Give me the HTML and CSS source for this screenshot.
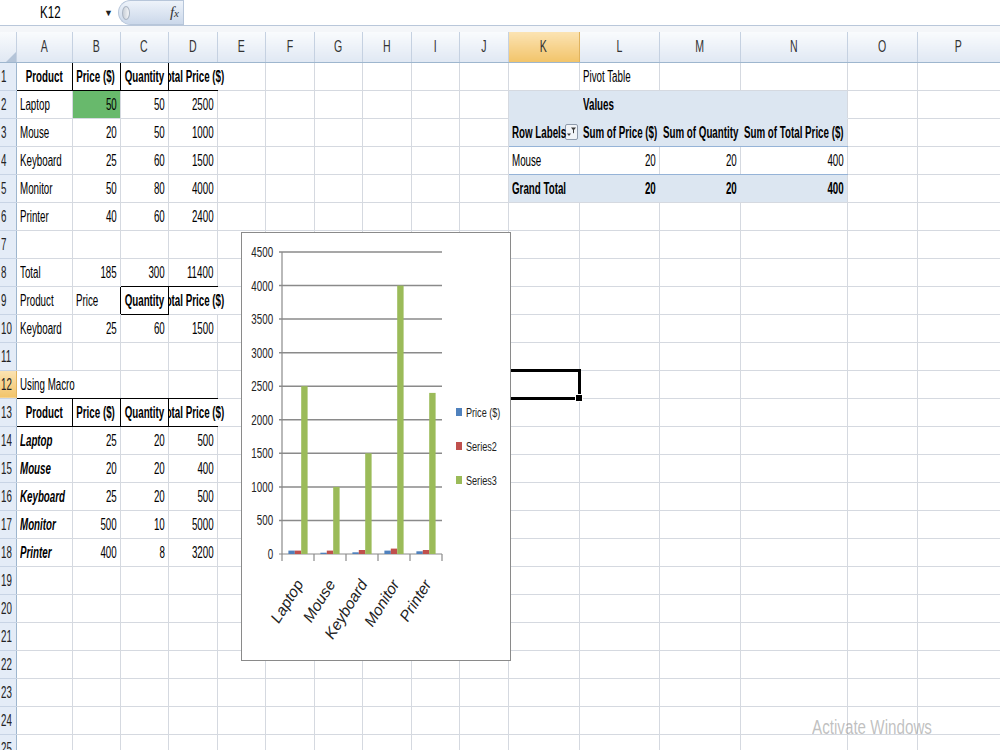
FILE: index.html
```html
<!DOCTYPE html>
<html lang="en">
<head>
  <meta charset="UTF-8">
  <meta name="viewport" content="width=device-width, initial-scale=1.0">
  <title>Book1 - Products</title>
  <link rel="stylesheet" href="styles.css">
</head>
<body>
  <div class="workbook">
    <!-- Formula bar -->
    <div class="formula-bar">
      <div class="name-box"><span>K12</span></div>
      <span class="drop">&#9660;</span>
      <div class="fx-pill">
        <span class="knob"></span>
        <span class="fx">f<small>x</small></span>
      </div>
      <div class="formula-input"></div>
    </div>
    <div class="bar-gap"></div>

    <!-- Sheet -->
    <table class="sheet">
      <colgroup>
        <col style="width:16px"><col style="width:56px"><col style="width:48px"><col style="width:48px">
        <col style="width:49px"><col style="width:48px"><col style="width:49px"><col style="width:48px">
        <col style="width:49px"><col style="width:48px"><col style="width:49px"><col style="width:71px">
        <col style="width:80px"><col style="width:81px"><col style="width:107px"><col style="width:70px">
        <col style="width:83px">
      </colgroup>
      <thead>
        <tr>
          <th class="corner"><svg width="10" height="10" viewBox="0 0 10 10"><path d="M10 0V10H0Z" fill="#b4c4d8"/></svg></th>
          <th><span>A</span></th><th><span>B</span></th><th><span>C</span></th><th><span>D</span></th><th><span>E</span></th><th><span>F</span></th><th><span>G</span></th><th><span>H</span></th><th><span>I</span></th><th><span>J</span></th>
          <th class="sel"><span>K</span></th><th><span>L</span></th><th><span>M</span></th><th><span>N</span></th><th><span>O</span></th><th><span>P</span></th>
        </tr>
      </thead>
      <tbody>
        <tr><th><span>1</span></th><td class="b c br bb"><span>Product</span></td><td class="b c br bb"><span>Price ($)</span></td><td class="b c br bb"><span>Quantity</span></td><td class="b bb spill"><div class="fit"><span>Total Price ($)</span></div></td><td></td><td></td><td></td><td></td><td></td><td></td><td></td><td><span>Pivot Table</span></td><td></td><td></td><td></td><td></td></tr>
        <tr><th><span>2</span></th><td><span>Laptop</span></td><td class="n good"><span>50</span></td><td class="n"><span>50</span></td><td class="n"><span>2500</span></td><td></td><td></td><td></td><td></td><td></td><td></td><td class="fill fill-r fill-b"></td><td class="fill fill-r fill-b b"><span>Values</span></td><td class="fill fill-r fill-b"></td><td class="fill fill-b"></td><td></td><td></td></tr>
        <tr><th><span>3</span></th><td><span>Mouse</span></td><td class="n"><span>20</span></td><td class="n"><span>50</span></td><td class="n"><span>1000</span></td><td></td><td></td><td></td><td></td><td></td><td></td>
          <td class="fill fill-r pvline b"><div class="row-labels"><span>Row Labels</span>
            <svg class="filter" width="13" height="16" viewBox="0 0 13 16"><rect x="0.5" y="0.5" width="12" height="15" rx="1.5" fill="#f1f4f8" stroke="#8e9aab"/><path d="M6 3.5h5l-2 2.4v3.6l-1-.8V5.9z" fill="#3a3a3a"/><path d="M2 9.5h4l-2 2.6z" fill="#3a3a3a"/></svg>
          </div></td>
          <td class="fill fill-r pvline b"><span>Sum of Price ($)</span></td><td class="fill fill-r pvline b"><span>Sum of Quantity</span></td><td class="fill pvline b"><span>Sum of Total Price ($)</span></td><td></td><td></td></tr>
        <tr><th><span>4</span></th><td><span>Keyboard</span></td><td class="n"><span>25</span></td><td class="n"><span>60</span></td><td class="n"><span>1500</span></td><td></td><td></td><td></td><td></td><td></td><td></td><td class="pvline"><span>Mouse</span></td><td class="n pvline"><span>20</span></td><td class="n pvline"><span>20</span></td><td class="n pvline"><span>400</span></td><td></td><td></td></tr>
        <tr><th><span>5</span></th><td><span>Monitor</span></td><td class="n"><span>50</span></td><td class="n"><span>80</span></td><td class="n"><span>4000</span></td><td></td><td></td><td></td><td></td><td></td><td></td><td class="fill fill-r b"><span>Grand Total</span></td><td class="fill fill-r b n"><span>20</span></td><td class="fill fill-r b n"><span>20</span></td><td class="fill b n"><span>400</span></td><td></td><td></td></tr>
        <tr><th><span>6</span></th><td><span>Printer</span></td><td class="n"><span>40</span></td><td class="n"><span>60</span></td><td class="n"><span>2400</span></td><td></td><td></td><td></td><td></td><td></td><td></td><td></td><td></td><td></td><td></td><td></td><td></td></tr>
        <tr><th><span>7</span></th><td></td><td></td><td></td><td></td><td></td><td></td><td></td><td></td><td></td><td></td><td></td><td></td><td></td><td></td><td></td><td></td></tr>
        <tr><th><span>8</span></th><td><span>Total</span></td><td class="n"><span>185</span></td><td class="n bb"><span>300</span></td><td class="n bb"><span>11400</span></td><td></td><td></td><td></td><td></td><td></td><td></td><td></td><td></td><td></td><td></td><td></td><td></td></tr>
        <tr><th><span>9</span></th><td><span>Product</span></td><td class="br"><span>Price</span></td><td class="b c br bb"><span>Quantity</span></td><td class="b spill"><div class="fit"><span>Total Price ($)</span></div></td><td></td><td></td><td></td><td></td><td></td><td></td><td></td><td></td><td></td><td></td><td></td><td></td></tr>
        <tr><th><span>10</span></th><td><span>Keyboard</span></td><td class="n"><span>25</span></td><td class="n"><span>60</span></td><td class="n"><span>1500</span></td><td></td><td></td><td></td><td></td><td></td><td></td><td></td><td></td><td></td><td></td><td></td><td></td></tr>
        <tr><th><span>11</span></th><td></td><td></td><td></td><td></td><td></td><td></td><td></td><td></td><td></td><td></td><td></td><td></td><td></td><td></td><td></td><td></td></tr>
        <tr><th class="sel"><span>12</span></th><td class="bb spill"><span>Using Macro</span></td><td class="bb"></td><td class="bb"></td><td class="bb"></td><td></td><td></td><td></td><td></td><td></td><td></td><td class="active"></td><td></td><td></td><td></td><td></td><td></td></tr>
        <tr><th><span>13</span></th><td class="b c br bb"><span>Product</span></td><td class="b c br bb"><span>Price ($)</span></td><td class="b c br bb"><span>Quantity</span></td><td class="b bb spill"><div class="fit"><span>Total Price ($)</span></div></td><td></td><td></td><td></td><td></td><td></td><td></td><td></td><td></td><td></td><td></td><td></td><td></td></tr>
        <tr><th><span>14</span></th><td class="bi"><span>Laptop</span></td><td class="n"><span>25</span></td><td class="n"><span>20</span></td><td class="n"><span>500</span></td><td></td><td></td><td></td><td></td><td></td><td></td><td></td><td></td><td></td><td></td><td></td><td></td></tr>
        <tr><th><span>15</span></th><td class="bi"><span>Mouse</span></td><td class="n"><span>20</span></td><td class="n"><span>20</span></td><td class="n"><span>400</span></td><td></td><td></td><td></td><td></td><td></td><td></td><td></td><td></td><td></td><td></td><td></td><td></td></tr>
        <tr><th><span>16</span></th><td class="bi"><span>Keyboard</span></td><td class="n"><span>25</span></td><td class="n"><span>20</span></td><td class="n"><span>500</span></td><td></td><td></td><td></td><td></td><td></td><td></td><td></td><td></td><td></td><td></td><td></td><td></td></tr>
        <tr><th><span>17</span></th><td class="bi"><span>Monitor</span></td><td class="n"><span>500</span></td><td class="n"><span>10</span></td><td class="n"><span>5000</span></td><td></td><td></td><td></td><td></td><td></td><td></td><td></td><td></td><td></td><td></td><td></td><td></td></tr>
        <tr><th><span>18</span></th><td class="bi"><span>Printer</span></td><td class="n"><span>400</span></td><td class="n"><span>8</span></td><td class="n"><span>3200</span></td><td></td><td></td><td></td><td></td><td></td><td></td><td></td><td></td><td></td><td></td><td></td><td></td></tr>
        <tr><th><span>19</span></th><td></td><td></td><td></td><td></td><td></td><td></td><td></td><td></td><td></td><td></td><td></td><td></td><td></td><td></td><td></td><td></td></tr>
        <tr><th><span>20</span></th><td></td><td></td><td></td><td></td><td></td><td></td><td></td><td></td><td></td><td></td><td></td><td></td><td></td><td></td><td></td><td></td></tr>
        <tr><th><span>21</span></th><td></td><td></td><td></td><td></td><td></td><td></td><td></td><td></td><td></td><td></td><td></td><td></td><td></td><td></td><td></td><td></td></tr>
        <tr><th><span>22</span></th><td></td><td></td><td></td><td></td><td></td><td></td><td></td><td></td><td></td><td></td><td></td><td></td><td></td><td></td><td></td><td></td></tr>
        <tr><th><span>23</span></th><td></td><td></td><td></td><td></td><td></td><td></td><td></td><td></td><td></td><td></td><td></td><td></td><td></td><td></td><td></td><td></td></tr>
        <tr><th><span>24</span></th><td></td><td></td><td></td><td></td><td></td><td></td><td></td><td></td><td></td><td></td><td></td><td></td><td></td><td></td><td></td><td></td></tr>
        <tr><th><span>25</span></th><td></td><td></td><td></td><td></td><td></td><td></td><td></td><td></td><td></td><td></td><td></td><td></td><td></td><td></td><td></td><td></td></tr>
      </tbody>
    </table>

    <!-- Embedded chart (floats over the sheet) -->
    <div class="chart">
      <svg width="268" height="427" viewBox="0 0 268 427">
        <g class="grid">
          <line x1="37" y1="19" x2="200" y2="19"/>
          <line x1="37" y1="52.6" x2="200" y2="52.6"/>
          <line x1="37" y1="86.1" x2="200" y2="86.1"/>
          <line x1="37" y1="119.7" x2="200" y2="119.7"/>
          <line x1="37" y1="153.2" x2="200" y2="153.2"/>
          <line x1="37" y1="186.8" x2="200" y2="186.8"/>
          <line x1="37" y1="220.3" x2="200" y2="220.3"/>
          <line x1="37" y1="253.9" x2="200" y2="253.9"/>
          <line x1="37" y1="287.4" x2="200" y2="287.4"/>
        </g>
        <g class="axis">
          <line x1="40" y1="19" x2="40" y2="328"/>
          <line x1="37" y1="321" x2="200" y2="321"/>
          <line x1="72" y1="321" x2="72" y2="328"/>
          <line x1="104" y1="321" x2="104" y2="328"/>
          <line x1="136" y1="321" x2="136" y2="328"/>
          <line x1="168" y1="321" x2="168" y2="328"/>
          <line x1="200" y1="321" x2="200" y2="328"/>
        </g>
        <g class="y-labels">
          <text x="31" y="24">4500</text>
          <text x="31" y="57.6">4000</text>
          <text x="31" y="91.1">3500</text>
          <text x="31" y="124.7">3000</text>
          <text x="31" y="158.2">2500</text>
          <text x="31" y="191.8">2000</text>
          <text x="31" y="225.3">1500</text>
          <text x="31" y="258.9">1000</text>
          <text x="31" y="292.4">500</text>
          <text x="31" y="326">0</text>
        </g>
        <g fill="#4f81bd">
          <rect x="46.4" y="317.6" width="6.4" height="3.4"/>
          <rect x="78.4" y="319.7" width="6.4" height="1.3"/>
          <rect x="110.4" y="319.3" width="6.4" height="1.7"/>
          <rect x="142.4" y="317.6" width="6.4" height="3.4"/>
          <rect x="174.4" y="318.3" width="6.4" height="2.7"/>
        </g>
        <g fill="#c0504d">
          <rect x="52.8" y="317.6" width="6.4" height="3.4"/>
          <rect x="84.8" y="317.6" width="6.4" height="3.4"/>
          <rect x="116.8" y="317" width="6.4" height="4"/>
          <rect x="148.8" y="315.6" width="6.4" height="5.4"/>
          <rect x="180.8" y="317" width="6.4" height="4"/>
        </g>
        <g fill="#9bbb59">
          <rect x="59.2" y="153.2" width="6.4" height="167.8"/>
          <rect x="91.2" y="253.9" width="6.4" height="67.1"/>
          <rect x="123.2" y="220.3" width="6.4" height="100.7"/>
          <rect x="155.2" y="52.6" width="6.4" height="268.4"/>
          <rect x="187.2" y="159.9" width="6.4" height="161.1"/>
        </g>
        <g class="x-labels">
          <text transform="translate(62 351) rotate(-58)">Laptop</text>
          <text transform="translate(94 351) rotate(-58)">Mouse</text>
          <text transform="translate(126 351) rotate(-58)">Keyboard</text>
          <text transform="translate(158 351) rotate(-58)">Monitor</text>
          <text transform="translate(190 351) rotate(-58)">Printer</text>
        </g>
        <g class="legend">
          <rect x="214" y="175" width="6" height="8" fill="#4f81bd"/>
          <text x="224" y="184.5">Price ($)</text>
          <rect x="214" y="209" width="6" height="8" fill="#c0504d"/>
          <text x="224" y="218.5">Series2</text>
          <rect x="214" y="243" width="6" height="8" fill="#9bbb59"/>
          <text x="224" y="252.5">Series3</text>
        </g>
      </svg>
    </div>

    <div class="watermark">Activate Windows</div>
  </div>
</body>
</html>
```

FILE: styles.css
```css
/* General */
* {
  box-sizing: border-box;
}

body {
  margin: 0;
  width: 1000px;
  height: 750px;
  overflow: hidden;
  background: #fff;
  color: #000;
  font-family: "Liberation Sans", Arial, sans-serif;
  font-size: 16px;
}

.workbook {
  position: relative;
  height: 750px;
  overflow: hidden;
}

/* Calibri-like narrow text: the screen is squeezed sideways */
.name-box span,
.sheet th span,
.sheet td span {
  display: inline-block;
  transform: scaleX(0.61);
  transform-origin: left center;
}

/* Formula bar */
.formula-bar {
  display: flex;
  align-items: center;
  height: 26px;
  border-bottom: 1px solid #b9c7da;
}

.name-box {
  width: 104px;
  padding-left: 40px;
  font-size: 17px;
}

.name-box span {
  transform: scaleX(0.68);
}

.drop {
  width: 14px;
  font-size: 9px;
  color: #222;
}

.fx-pill {
  display: flex;
  align-items: center;
  justify-content: space-between;
  width: 65px;
  height: 25px;
  padding: 0 4px 0 3px;
  border-radius: 13px 0 0 13px;
  background: linear-gradient(#eef3fa, #cbd8ea);
  border: 1px solid #b7c6da;
  border-right: none;
}

.knob {
  width: 8px;
  height: 14px;
  border-radius: 50%;
  background: linear-gradient(90deg, #c9cfd7, #f4f6f9);
  border: 1px solid #aab4c2;
}

.fx {
  font-family: "Liberation Serif", serif;
  font-style: italic;
  font-size: 15px;
  color: #333;
}

.fx small {
  font-size: 11px;
}

.formula-input {
  flex: 1;
  height: 25px;
  border-left: 1px solid #b7c6da;
}

.bar-gap {
  height: 6px;
  background: #f4f6f9;
}

/* Sheet grid */
.sheet {
  border-collapse: collapse;
  table-layout: fixed;
  width: 1000px;
  line-height: 1;
}

.sheet th,
.sheet td {
  height: 28px;
  padding: 0 3px;
  white-space: nowrap;
  overflow: visible;
}

.sheet th {
  font-weight: normal;
}

.sheet td {
  border: 1px solid #d5d9e0;
  padding-top: 2px;
}

.sheet thead th {
  height: 30px;
  text-align: center;
  color: #333;
  background: linear-gradient(#f9fbfd, #e0e8f3);
  border-right: 1px solid #c5d1e1;
  border-bottom: 1px solid #9eb6ce;
}

.sheet thead th span {
  transform: scaleX(0.66);
  transform-origin: center;
}

.sheet thead th.corner {
  padding: 0;
  text-align: right;
  vertical-align: bottom;
  line-height: 0;
}

.sheet tbody th {
  padding: 2px 0 0 1px;
  text-align: left;
  color: #222;
  background: #e4ecf7;
  border-right: 1px solid #9eb6ce;
  border-bottom: 1px solid #c8d4e5;
}

.sheet th.sel {
  background: linear-gradient(#fbe3b3, #f2c46a);
  border-right-color: #e0b35e;
}

/* Cell formats */
.b { font-weight: bold; }
.bi { font-weight: bold; font-style: italic; }
.c { text-align: center; }
.n { text-align: right; }

/* wide unscaled boxes must not push the aligned text aside */
.sheet td.n span {
  margin-left: -60px;
  transform-origin: right center;
}

.sheet td.c span {
  margin: 0 -60px;
  transform-origin: center;
}

.br { border-right: 1px solid #000 !important; }
.bb { border-bottom: 1px solid #000 !important; }

.spill {
  border-right-style: hidden !important;
}

.sheet td.spill:has(.fit) {
  padding: 2px 0 0;
}

/* centred text that runs on into the empty cell at its right */
.fit {
  text-align: center;
  clip-path: polygon(0 -10px, 300% -10px, 300% 200%, 0 200%);
}

.sheet .fit span {
  margin: 0 -60px;
  transform-origin: center;
}

.good {
  background: #68b96c;
}

/* Pivot table */
.fill { background: #dce6f1; }
.fill-r { border-right-color: #dce6f1 !important; }
.fill-b { border-bottom-color: #dce6f1 !important; }
.pvline { border-bottom-color: #95b3d7 !important; }

.row-labels {
  display: flex;
  align-items: center;
  margin-right: -2px;
}

.row-labels span {
  flex: 1;
  min-width: 0;
}

.filter {
  flex: none;
  margin-top: -2px;
}

/* Active cell */
.active {
  position: relative;
}

.active::after {
  content: "";
  position: absolute;
  inset: -2px -2px -2px -2px;
  border: 3px solid #000;
}

.active::before {
  content: "";
  position: absolute;
  right: -4px;
  bottom: -4px;
  width: 6px;
  height: 6px;
  background: #000;
  border: 1px solid #fff;
  z-index: 1;
}

/* Chart */
.chart {
  position: absolute;
  left: 241px;
  top: 232px;
  width: 270px;
  height: 429px;
  background: #fff;
  border: 1px solid #8a8a8a;
  z-index: 2;
}

.chart svg {
  display: block;
  font-family: "Liberation Sans", Arial, sans-serif;
}

.grid line {
  stroke: #8a8a8a;
  stroke-width: 1.5;
}

.axis line {
  stroke: #8a8a8a;
  stroke-width: 1.2;
}

.y-labels text {
  font-size: 14px;
  text-anchor: end;
  fill: #222;
  transform-box: fill-box;
  transform-origin: right center;
  transform: scaleX(0.7);
}

.x-labels text {
  font-size: 15.5px;
  font-style: italic;
  text-anchor: end;
  fill: #222;
}

.legend text {
  font-size: 13px;
  fill: #222;
  transform-box: fill-box;
  transform-origin: left center;
  transform: scaleX(0.7);
}

/* Windows watermark */
.watermark {
  position: absolute;
  left: 812px;
  top: 716px;
  font-size: 20px;
  color: rgba(130, 130, 130, 0.5);
  transform: scaleX(0.76);
  transform-origin: left center;
  z-index: 3;
}
```
